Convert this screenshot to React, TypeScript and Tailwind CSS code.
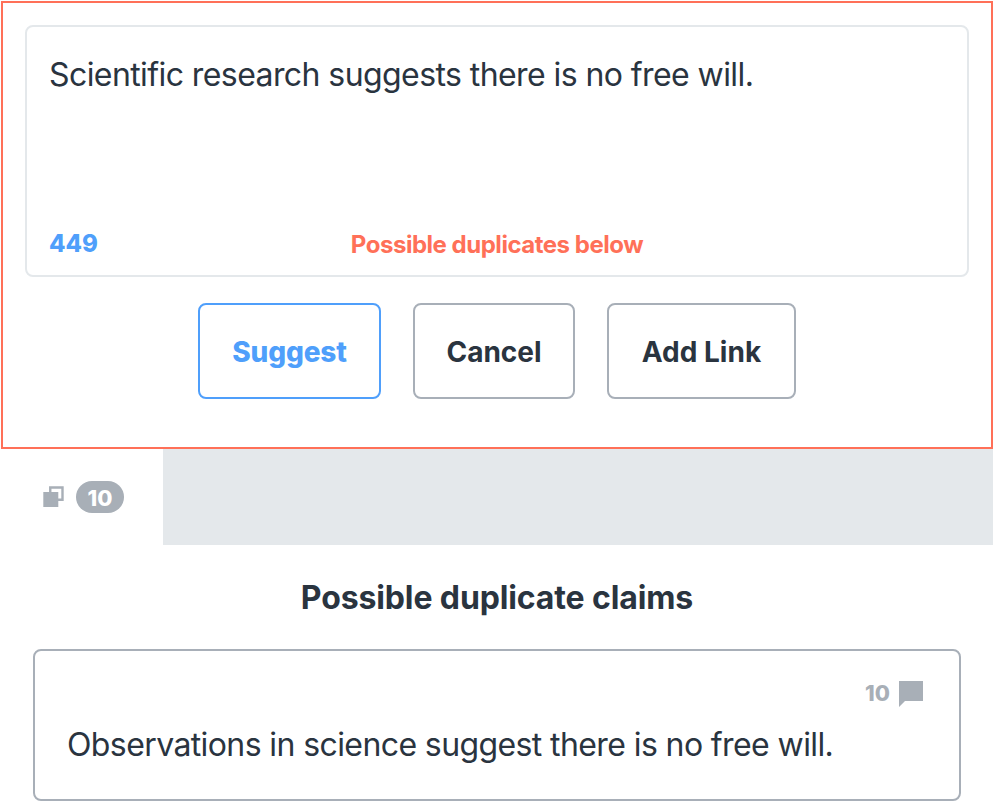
import React from 'react';

const actions = [
  { label: 'Suggest', className: 'w-[183px] border-[#4f9ffb] text-[#4f9ffb] font-extrabold tracking-[-0.15px]' },
  { label: 'Cancel', className: 'w-[162px] border-[#a8afb8] text-[#2a343f] font-bold' },
  { label: 'Add Link', className: 'w-[189px] border-[#a8afb8] text-[#2a343f] font-bold' },
];

const DuplicateIcon = () => (
  <svg width="21" height="21" viewBox="0 0 21 21" className="mb-0.5 shrink-0">
    <path d="M0.3 6h15v15h-15z" fill="#a8afb7" />
    <path d="M7.25 6V1.5h12.25v12.25H15" fill="none" stroke="#a8afb7" strokeWidth="2.4" />
  </svg>
);

const CommentIcon = () => (
  <svg width="24" height="26" viewBox="0 0 24 26" className="shrink-0">
    <path d="M0 0h24v20H6l-6 6z" fill="#a8afb7" />
  </svg>
);

const App = () => {
  return (
    <div className="flex h-[811px] w-[994px] flex-col overflow-hidden bg-white font-['Inter',sans-serif] text-[#2a343f]">
      {/* Claim editor */}
      <section className="ml-px mt-px h-[448px] w-[992px] shrink-0 border-2 border-[#ff7058] px-[22px] pt-[22px]">
        <div className="flex h-[252px] flex-col justify-between rounded-lg border-2 border-[#e4e8eb] px-[22px] pb-[13px] pt-[26px]">
          <p className="text-[32px] leading-[44px] tracking-[-0.58px] whitespace-nowrap">
            Scientific research suggests there is no free will.
          </p>
          <div className="grid grid-cols-3 items-center text-2xl">
            <span className="pb-0.5 font-extrabold text-[#4f9ffb]">449</span>
            <span className="justify-self-center font-bold tracking-[-0.48px] whitespace-nowrap text-[#ff7058]">
              Possible duplicates below
            </span>
          </div>
        </div>
        <div className="mt-[26px] flex justify-center gap-8">
          {actions.map((action) => (
            <button
              key={action.label}
              className={`h-24 rounded-lg border-2 pt-0.5 text-[28px] ${action.className}`}
            >
              {action.label}
            </button>
          ))}
        </div>
      </section>

      {/* Tabs */}
      <nav className="flex h-24 w-[993px] shrink-0 bg-[#e4e8eb]">
        <div className="flex w-[163px] items-center gap-3 bg-white pl-[43px]">
          <DuplicateIcon />
          <span className="flex h-8 w-12 items-center justify-center rounded-full bg-[#a8afb7] pt-0.5 text-[22px] font-extrabold text-white">
            10
          </span>
        </div>
      </nav>

      {/* Duplicate claims */}
      <main className="px-[33px] pt-[31px]">
        <h2 className="text-center text-[32px] leading-[44px] font-bold tracking-[-0.12px]">
          Possible duplicate claims
        </h2>
        <article className="mt-[29px] h-[152px] w-[928px] rounded-lg border-2 border-[#a8afb8] px-8 pt-[26px]">
          <div className="flex items-center justify-end gap-[9px] pr-1 text-[22px] font-extrabold text-[#a8afb7]">
            <span>10</span>
            <CommentIcon />
          </div>
          <p className="mt-[13px] text-[32px] leading-[44px] tracking-[-0.6px] whitespace-nowrap">
            Observations in science suggest there is no free will.
          </p>
        </article>
      </main>
    </div>
  );
};

export default App;
